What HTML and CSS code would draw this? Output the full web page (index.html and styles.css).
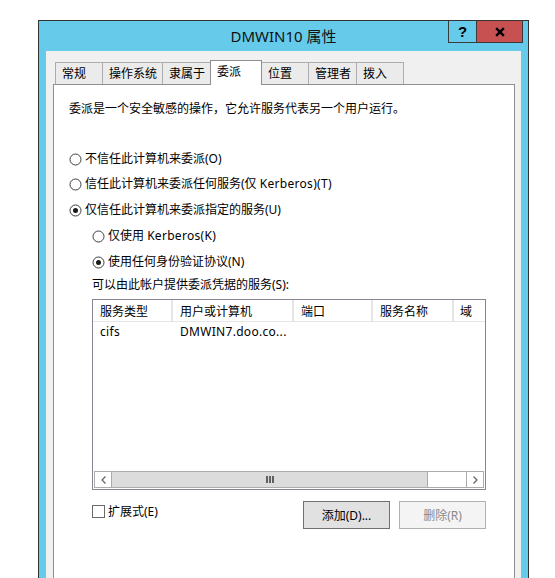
FILE: index.html
```html
<!DOCTYPE html>
<html lang="zh-CN">
<head>
<meta charset="utf-8">
<title>DMWIN10 属性</title>
<link rel="stylesheet" href="styles.css">
</head>
<body>
<div class="window">
  <div class="titlebar">
    <div></div>
    <div class="title">DMWIN10 属性</div>
    <div class="controls">
      <div class="cbtn help">?</div>
      <div class="cbtn close">
        <svg width="10" height="10" viewBox="0 0 10 10"><path d="M1.2 1.2 L8.8 8.8 M8.8 1.2 L1.2 8.8" stroke="#000" stroke-width="2.4" fill="none"/></svg>
      </div>
    </div>
  </div>
  <div class="client">
    <div class="tabs">
      <div class="tab">常规</div>
      <div class="tab">操作系统</div>
      <div class="tab">隶属于</div>
      <div class="tab active">委派</div>
      <div class="tab">位置</div>
      <div class="tab">管理者</div>
      <div class="tab">拨入</div>
    </div>
    <div class="panel">
      <div class="desc">委派是一个安全敏感的操作，它允许服务代表另一个用户运行。</div>

      <div class="opt first">
        <svg class="radio" width="13" height="13" viewBox="0 0 13 13"><circle cx="6.5" cy="6.5" r="5.5" fill="#fff" stroke="#3c3c3c"/></svg>
        <span>不信任此计算机来委派(O)</span>
      </div>
      <div class="opt">
        <svg class="radio" width="13" height="13" viewBox="0 0 13 13"><circle cx="6.5" cy="6.5" r="5.5" fill="#fff" stroke="#3c3c3c"/></svg>
        <span>信任此计算机来委派任何服务(仅 <span class="lat">Kerberos)(T)</span></span>
      </div>
      <div class="opt">
        <svg class="radio" width="13" height="13" viewBox="0 0 13 13"><circle cx="6.5" cy="6.5" r="5.5" fill="#fff" stroke="#3c3c3c"/><circle cx="6.5" cy="6.5" r="2.5" fill="#1a1a1a"/></svg>
        <span>仅信任此计算机来委派指定的服务(U)</span>
      </div>
      <div class="opt sub">
        <svg class="radio" width="13" height="13" viewBox="0 0 13 13"><circle cx="6.5" cy="6.5" r="5.5" fill="#fff" stroke="#3c3c3c"/></svg>
        <span>仅使用 <span class="lat">Kerberos(K)</span></span>
      </div>
      <div class="opt sub">
        <svg class="radio" width="13" height="13" viewBox="0 0 13 13"><circle cx="6.5" cy="6.5" r="5.5" fill="#fff" stroke="#3c3c3c"/><circle cx="6.5" cy="6.5" r="2.5" fill="#1a1a1a"/></svg>
        <span>使用任何身份验证协议(N)</span>
      </div>

      <div class="label">可以由此帐户提供委派凭据的服务(S):</div>

      <div class="list">
        <div class="lrow head">
          <div class="cell c1">服务类型</div>
          <div class="cell c2">用户或计算机</div>
          <div class="cell c3">端口</div>
          <div class="cell c4">服务名称</div>
          <div class="cell c5">域</div>
        </div>
        <div class="lrow item">
          <div class="cell c1 lat">cifs</div>
          <div class="cell c2 lat">DMWIN7.doo.co...</div>
          <div class="cell c3"></div>
          <div class="cell c4"></div>
          <div class="cell c5"></div>
        </div>
        <div class="hscroll">
          <div class="sbtn">
            <svg width="5" height="8" viewBox="0 0 5 8"><polyline points="4.5,0.5 1,4 4.5,7.5" fill="none" stroke="#606060" stroke-width="1.2"/></svg>
          </div>
          <div class="thumb"><span></span><span></span><span></span></div>
          <div class="track"></div>
          <div class="sbtn">
            <svg width="5" height="8" viewBox="0 0 5 8"><polyline points="0.5,0.5 4,4 0.5,7.5" fill="none" stroke="#606060" stroke-width="1.2"/></svg>
          </div>
        </div>
      </div>

      <div class="bottom">
        <div class="check">
          <span class="box"></span>
          <span>扩展式(E)</span>
        </div>
        <div class="buttons">
          <div class="btn">添加(D)...</div>
          <div class="btn disabled">删除(R)</div>
        </div>
      </div>
    </div>
  </div>
</div>
</body>
</html>
```
FILE: styles.css
```css
html, body {
  margin: 0;
  height: 100%;
}
body {
  background: #ffffff;
  overflow: hidden;
  padding: 20px 0 0 38px;
  box-sizing: border-box;
  font-family: "Segoe UI", "Noto Sans", "Noto Sans CJK SC", sans-serif;
  font-size: 12px;
  color: #000;
}
.lat {
  letter-spacing: 0.3px;
}
.window {
  width: 491px;
  height: 558px;
  box-sizing: border-box;
  border: 1px solid #333333;
  border-bottom: none;
  background: #66cbea;
  display: flex;
  flex-direction: column;
  overflow: hidden;
}
.titlebar {
  height: 30px;
  flex: none;
  display: grid;
  grid-template-columns: 1fr auto 1fr;
}
.title {
  font-size: 15px;
  line-height: 30px;
  color: #111;
  white-space: nowrap;
}
.controls {
  justify-self: end;
  align-self: start;
  display: flex;
  margin-top: -1px;
  margin-right: 5px;
}
.cbtn {
  box-sizing: border-box;
  height: 23px;
  border: 1px solid #3a3a3a;
  display: flex;
  align-items: center;
  justify-content: center;
}
.help {
  width: 29px;
  font-family: "Liberation Sans", sans-serif;
  font-weight: bold;
  font-size: 15px;
  line-height: 1;
}
.close {
  width: 47px;
  margin-left: -1px;
  background: #c75050;
}
.client {
  flex: 1;
  min-height: 0;
  margin: 0 7px;
  background: #f0f0f0;
  padding: 11px 6px 0 7px;
  display: flex;
  flex-direction: column;
}
.tabs {
  display: flex;
  flex: none;
  align-items: flex-end;
  height: 22px;
  padding-left: 2px;
}
.tab {
  box-sizing: border-box;
  min-width: 48px;
  height: 22px;
  padding: 3px 5px 0 6px;
  line-height: 16px;
  border: 1px solid #acacac;
  border-bottom: none;
  background: #ebebeb;
  white-space: nowrap;
}
.tab + .tab {
  margin-left: -1px;
}
.tab.active {
  min-width: 52px;
  height: 25px;
  margin-bottom: -1px;
  background: #ffffff;
  border-color: #8e8f8f;
  z-index: 2;
}
.panel {
  flex: 1;
  min-height: 0;
  background: #ffffff;
  border: 1px solid #8e8f8f;
  border-bottom: none;
  padding: 16px 0 0 15px;
  display: flex;
  flex-direction: column;
  align-items: flex-start;
}
.desc {
  line-height: 16px;
  white-space: nowrap;
}
.opt {
  display: flex;
  align-items: center;
  height: 16px;
  line-height: 16px;
  margin-top: 10px;
  white-space: nowrap;
}
.opt.first {
  margin-top: 34px;
}
.opt:nth-of-type(3) {
  margin-top: 9px;
}
.radio {
  display: block;
  margin-right: 3px;
  flex: none;
}
.opt.sub {
  margin-left: 23px;
}
.label {
  margin: 7px 0 0 23px;
  line-height: 16px;
  white-space: nowrap;
}
.list {
  margin: 6px 0 0 23px;
  width: 394px;
  height: 191px;
  flex: none;
  box-sizing: border-box;
  border: 1px solid #828790;
  background: #ffffff;
  display: flex;
  flex-direction: column;
  overflow: hidden;
}
.lrow {
  display: flex;
  white-space: nowrap;
}
.head {
  height: 22px;
  box-sizing: border-box;
  border-bottom: 1px solid #e5e5e5;
}
.cell {
  box-sizing: border-box;
  padding-left: 7px;
  line-height: 16px;
  flex: none;
  overflow: hidden;
}
.head .cell {
  padding-top: 4px;
  border-right: 2px solid #e5e5e5;
  height: 21px;
}
.item .cell {
  padding-top: 2px;
}
.c1 { width: 80px; }
.c2 { width: 121px; }
.c3 { width: 79px; }
.c4 { width: 81px; }
.c5 { width: 40px; padding-left: 6px; }
.hscroll {
  margin: auto 1px 1px 1px;
  height: 17px;
  flex: none;
  box-sizing: border-box;
  border: 1px solid #ababab;
  display: flex;
  background: #ffffff;
}
.sbtn {
  width: 16px;
  flex: none;
  display: flex;
  align-items: center;
  justify-content: center;
  background: #ffffff;
}
.sbtn:first-child {
  border-right: 1px solid #ababab;
}
.sbtn:last-child {
  border-left: 1px solid #ababab;
}
.thumb {
  width: 315px;
  flex: none;
  background: #dcdcdc;
  border-right: 1px solid #ababab;
  display: flex;
  align-items: center;
  justify-content: center;
  gap: 1px;
}
.thumb span {
  width: 2px;
  height: 7px;
  background: #606060;
}
.track {
  flex: 1;
  background: #ffffff;
}
.bottom {
  margin: 11px 0 0 23px;
  width: 394px;
  flex: none;
  display: flex;
  align-items: flex-start;
}
.check {
  margin-top: 4px;
  display: flex;
  align-items: center;
  height: 13px;
  line-height: 16px;
  white-space: nowrap;
}
.box {
  width: 13px;
  height: 13px;
  box-sizing: border-box;
  border: 1px solid #6a6a6a;
  background: #fff;
  margin-right: 3px;
}
.buttons {
  margin-left: auto;
  display: flex;
  gap: 9px;
}
.btn {
  width: 87px;
  height: 28px;
  box-sizing: border-box;
  border: 1px solid #707070;
  background: #e1e1e1;
  display: flex;
  align-items: center;
  justify-content: center;
  white-space: nowrap;
}
.btn.disabled {
  border-color: #adb2b5;
  background: #f4f4f4;
  color: #8a8a8a;
}
```
